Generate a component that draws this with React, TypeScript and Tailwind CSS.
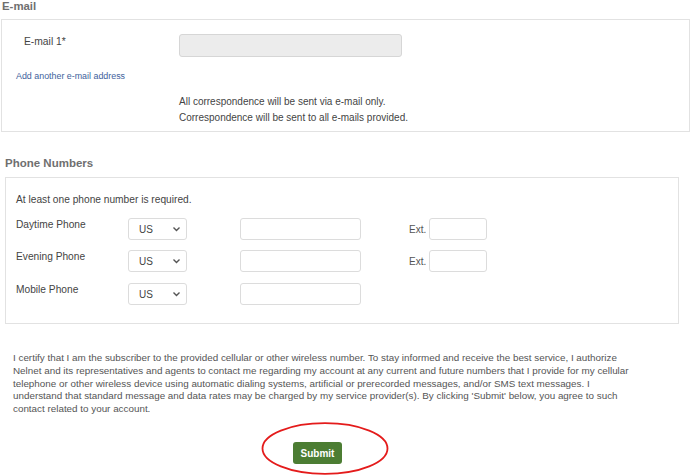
import React from 'react';

const font = { fontFamily: '"Liberation Sans", Arial, sans-serif' };

const CountrySelect: React.FC = () => (
  <div className="flex h-[22px] w-[59px] items-center justify-between rounded-[3px] border border-[#dcdcdc] bg-white pl-[10px] pr-[5px] text-[10px] text-[#444]">
    <span>US</span>
    <svg width="9" height="6" viewBox="0 0 9 6" fill="none">
      <path d="M1.5 1.5 L4.5 4.5 L7.5 1.5" stroke="#555" strokeWidth="1.4" />
    </svg>
  </div>
);

const TextBox: React.FC<{ w: string }> = ({ w }) => (
  <div className={`h-[22px] ${w} rounded-[3px] border border-[#dcdcdc] bg-white`} />
);

const PhoneRow: React.FC<{ label: string; ext?: boolean }> = ({ label, ext }) => (
  <div className="flex h-[22px] items-start">
    <div className="w-[122px] pl-[10px] pt-[1px] text-[10.2px] leading-[12px] text-[#444]">{label}</div>
    <CountrySelect />
    <div className="ml-[53px]">
      <TextBox w="w-[121px]" />
    </div>
    {ext && (
      <div className="ml-[48px] flex items-center">
        <span className="mr-[3px] text-[10px] text-[#555]">Ext.</span>
        <TextBox w="w-[58px]" />
      </div>
    )}
  </div>
);

const disclaimer = [
  'I certify that I am the subscriber to the provided cellular or other wireless number. To stay informed and receive the best service, I authorize',
  'Nelnet and its representatives and agents to contact me regarding my account at any current and future numbers that I provide for my cellular',
  'telephone or other wireless device using automatic dialing systems, artificial or prerecorded messages, and/or SMS text messages. I',
  "understand that standard message and data rates may be charged by my service provider(s). By clicking 'Submit' below, you agree to such",
  'contact related to your account.',
];

export default function App() {
  return (
    <div className="h-[476px] w-[691px] overflow-hidden bg-white" style={font}>
      {/* E-mail section */}
      <h2 className="pl-[2px] text-[11.4px] font-bold leading-[13px] text-[#6f6f6f]">E-mail</h2>
      <div className="ml-[1px] mr-[1px] mt-[6px] h-[113px] border border-[#e2e2e2]">
        <div className="mt-[14px] flex items-start">
          <div className="w-[177px] pl-[22px] pt-[2px] text-[10.3px] leading-[12px] text-[#444]">E-mail 1*</div>
          <div className="h-[23px] w-[223px] rounded-[3px] border border-[#d6d6d6] bg-[#ececec]" />
        </div>
        <div className="mt-[14px] pl-[14px] text-[8.9px] leading-[10px] text-[#3e5f9c]">Add another e-mail address</div>
        <div className="mt-[13px] pl-[177px] text-[10px] leading-[16px] text-[#444]">
          <div>All correspondence will be sent via e-mail only.</div>
          <div>Correspondence will be sent to all e-mails provided.</div>
        </div>
      </div>

      {/* Phone section */}
      <h2 className="mt-[25px] pl-[5px] text-[11.5px] font-bold leading-[13px] text-[#6f6f6f]">Phone Numbers</h2>
      <div className="ml-[5px] mt-[7px] h-[147px] w-[674px] border border-[#e2e2e2]">
        <div className="mt-[16px] pl-[10px] text-[10.2px] leading-[12px] text-[#444]">At least one phone number is required.</div>
        <div className="mt-[12px] flex flex-col gap-[10px]">
          <PhoneRow label="Daytime Phone" ext />
          <PhoneRow label="Evening Phone" ext />
          <div className="mt-[1px]">
            <PhoneRow label="Mobile Phone" />
          </div>
        </div>
      </div>

      {/* Disclaimer */}
      <div className="mt-[28px] pl-[13px] text-[9.85px] leading-[12.8px] text-[#555]">
        {disclaimer.map((line) => (
          <div key={line} className="whitespace-nowrap">{line}</div>
        ))}
      </div>

      {/* Submit */}
      <div className="mt-[6px] pl-[261px]">
        <div className="relative h-[53px] w-[128px] pl-[32px] pt-[18px]">
          <svg className="absolute inset-0" width="128" height="53" viewBox="0 0 128 53" fill="none">
            <ellipse cx="64" cy="26.5" rx="62.5" ry="25.3" stroke="#e41b1b" strokeWidth="1.8" />
          </svg>
          <button className="relative h-[22px] w-[49px] rounded-[3px] bg-[#4c7d33] text-[10px] font-bold text-white">Submit</button>
        </div>
      </div>
    </div>
  );
}
